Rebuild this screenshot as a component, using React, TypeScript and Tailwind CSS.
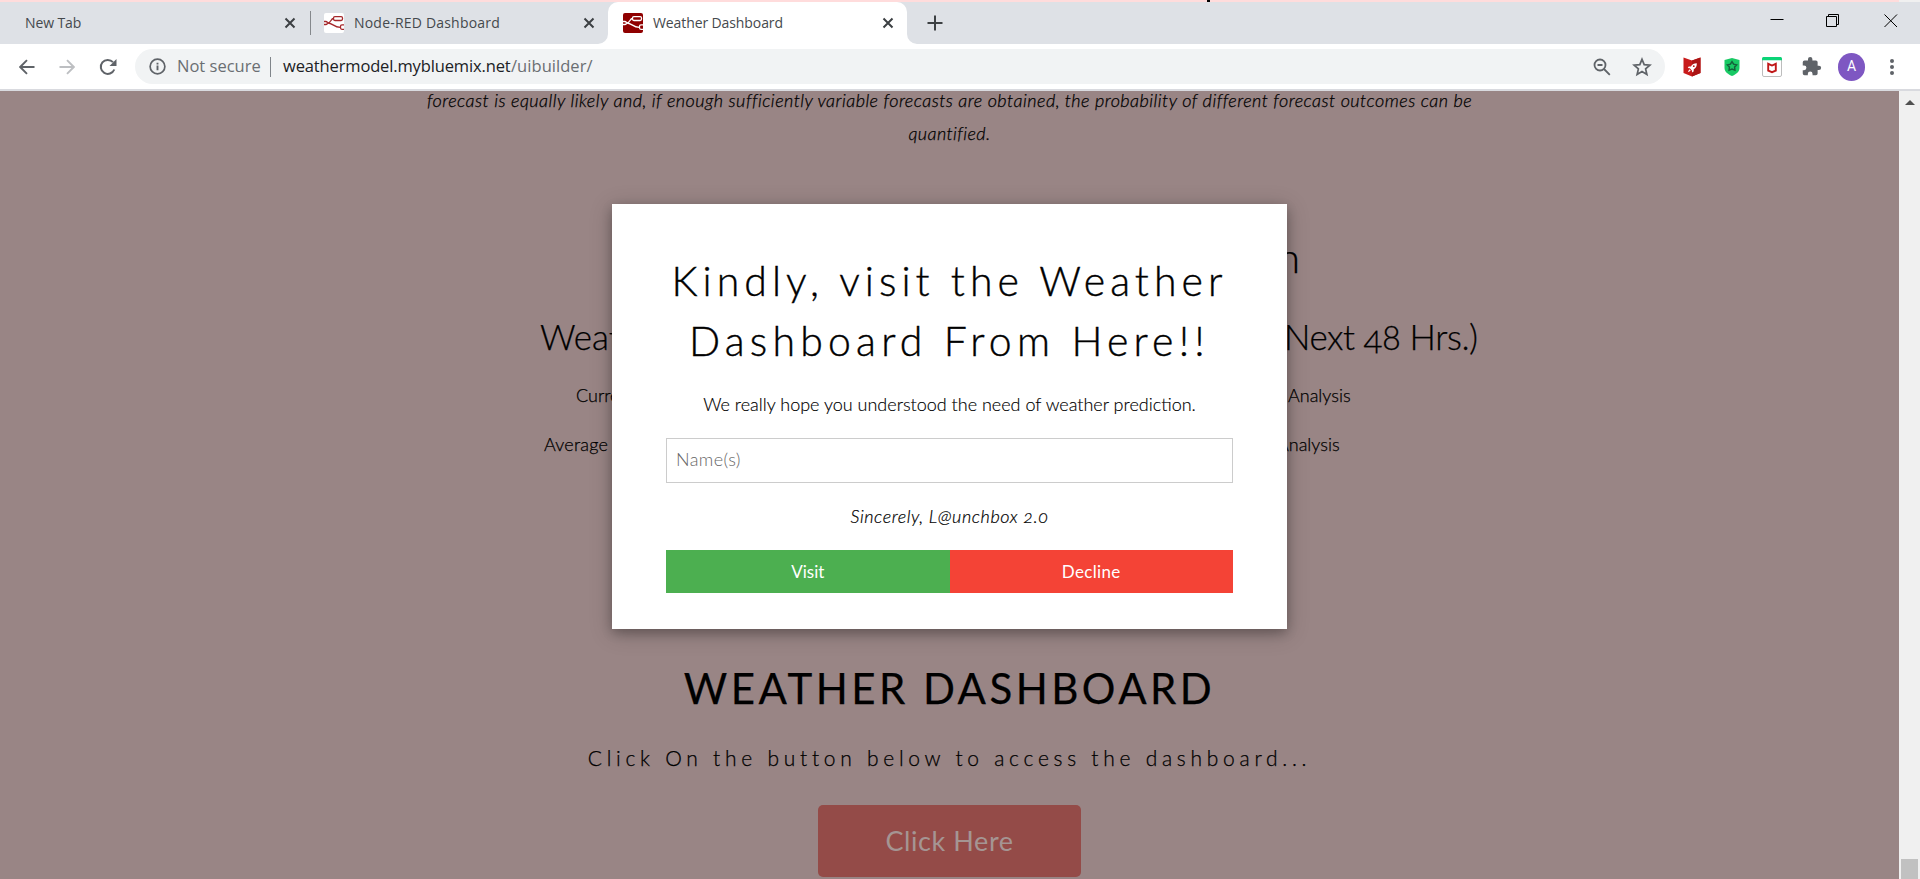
import type { ReactNode } from "react";

function NodeRed({ bg, fg, className = "" }: { bg: string; fg: string; className?: string }) {
  return (
    <svg viewBox="0 0 20 20" className={"h-5 w-5 shrink-0 " + className}>
      <rect width="20" height="20" rx="2" fill={bg} />
      <g fill="none" stroke={fg} strokeWidth="1.3">
        <path d="M0 8.500h2a1.300 1.300 0 0 1 1.300 1.300v.4A1.300 1.300 0 0 1 2 11.500H0M3.300 10C7.500 10 6.500 5.500 9.500 5.500M3.300 10c5-.5 6.500 4.500 13.200 4.300" />
        <rect x="9.500" y="3.700" width="9" height="3.800" rx="1.400" />
        <path d="M20 11.800h-2a1.500 1.500 0 0 0-1.500 1.500v1.500a1.500 1.500 0 0 0 1.500 1.500h2" />
      </g>
    </svg>
  );
}

function TabClose() {
  return (
    <svg viewBox="0 0 12 12" className="h-3 w-3 shrink-0" stroke="#3c4043" strokeWidth="2">
      <path d="M1.500 1.500l9 9M10.500 1.500l-9 9" />
    </svg>
  );
}

function TabBar() {
  return (
    <div className="flex h-[42px] shrink-0 bg-[#dee1e6] text-[14px] tracking-[-0.1px] text-[#45494d]">
      <div className="flex w-[310px] shrink-0 items-center justify-between pr-[14px] pb-px pl-[25px]">
        <span>New Tab</span>
        <TabClose />
      </div>
      <div className="mt-[9px] h-6 w-px shrink-0 bg-[#85888c]" />
      <div className="flex w-[297px] shrink-0 items-center pr-[13px] pb-px pl-[13px]">
        <NodeRed bg="#ffffff" fg="#a5282c" />
        <span className="ml-[10px] flex-1 tracking-[0.2px]">Node-RED Dashboard</span>
        <TabClose />
      </div>
      <div className="relative flex w-[299px] shrink-0 items-center rounded-t-[10px] bg-white pr-[13px] pb-px pl-[15px]">
        <svg viewBox="0 0 10 10" className="absolute bottom-0 -left-[10px] h-[10px] w-[10px]" fill="#fff"><path d="M10 0v10H0A10 10 0 0 0 10 0z" /></svg>
        <svg viewBox="0 0 10 10" className="absolute -right-[10px] bottom-0 h-[10px] w-[10px]" fill="#fff"><path d="M0 0v10h10A10 10 0 0 1 0 0z" /></svg>
        <NodeRed bg="#8f0000" fg="#ffffff" />
        <span className="ml-[10px] flex-1">Weather Dashboard</span>
        <TabClose />
      </div>
      <div className="flex flex-1 items-center pb-px pl-[20px]">
        <svg viewBox="0 0 16 16" className="h-4 w-4" stroke="#3c4043" strokeWidth="2"><path d="M8 .5v15M.5 8h15" /></svg>
      </div>
      <div className="flex items-start pt-[12px] pr-[22px]">
        <svg viewBox="0 0 14 14" className="mr-[42px] h-[14px] w-[14px]" stroke="#000"><path d="M.5 5.500h13" /></svg>
        <svg viewBox="0 0 14 14" className="mr-[44px] h-[14px] w-[14px]" stroke="#000" fill="none"><path d="M.5 2.500h10v10H.5zM2.500 2.500V.5h10v10h-2" /></svg>
        <svg viewBox="0 0 14 14" className="h-[14px] w-[14px]" stroke="#000"><path d="M.5.5l12.500 12.500M13 .5L.5 13" /></svg>
      </div>
    </div>
  );
}

function Toolbar() {
  return (
    <div className="flex h-[47px] shrink-0 items-center border-b-2 border-[#d9dadf] bg-white pl-[19px]">
      <svg viewBox="0 0 16 16" className="h-4 w-4" fill="none" stroke="#5f6368" strokeWidth="1.900"><path d="M15.500 8H1.500M8 1.200L1.200 8 8 14.800" /></svg>
      <svg viewBox="0 0 16 16" className="ml-6 h-4 w-4" fill="none" stroke="#bdbfc2" strokeWidth="1.900"><path d="M.5 8h14M8 1.200L14.800 8 8 14.800" /></svg>
      <svg viewBox="0 0 18 18" className="ml-6 h-[18px] w-[18px]" fill="none" stroke="#5f6368" strokeWidth="2"><path d="M15.300 11.500A7 7 0 1 1 14 4.200" /><path d="M17.500 1v7h-7z" fill="#5f6368" stroke="none" /></svg>
      <div className="ml-[18px] flex h-[35px] w-[1530px] items-center rounded-full bg-[#f1f3f4] pr-[13px] pl-[14px] text-[16.5px]">
        <svg viewBox="0 0 18 18" className="h-[17px] w-[17px]" fill="none" stroke="#5f6368" strokeWidth="1.800"><circle cx="9" cy="9" r="7.800" /><path d="M9 8v5M9 5v1.800" strokeWidth="2" /></svg>
        <span className="ml-[11px] w-[84px] text-[#6a6e72]">Not secure</span>
        <span className="ml-[9px] h-5 w-px bg-[#80858a]" />
        <span className="ml-[12px] w-[228px] tracking-[-0.140px] text-[#202124]">weathermodel.mybluemix.net</span>
        <span className="flex-1 tracking-[0.05px] text-[#6a6e72]">/uibuilder/</span>
        <svg viewBox="0 0 18 18" className="h-[18px] w-[18px]" fill="none" stroke="#5f6368" strokeWidth="1.800"><circle cx="7" cy="7" r="5.500" /><path d="M4.500 7h5M11 11l5.800 5.800" /></svg>
        <svg viewBox="0 0 20 20" className="ml-[21px] h-5 w-5" fill="none" stroke="#5f6368" strokeWidth="1.700"><path d="M10 2.300l2.200 5.300 5.700.5-4.300 3.800 1.300 5.600L10 14.500l-4.900 3 1.300-5.600L2.100 8.100l5.700-.5z" /></svg>
      </div>
      <svg viewBox="0 0 18 20" className="ml-[18px] h-5 w-[18px]">
        <path d="M.5.500L9 3.500l8.500-3V16L9 19.500.500 16z" fill="#c81a1a" />
        <path d="M9 3.500l8.500-3V16L9 19.500z" fill="#ab1414" />
        <path d="M13.800 6.200c-2.800 0-4.600 1.200-5.900 3.200l-2.200.2-.9 1.400 2 .3 2.100 2.100.3 2 1.400-.9.200-2.200c2-1.300 3.200-3.200 3-6.100zM6.300 12.200l-1.500 3 3-1.500z" fill="#fff" />
        <circle cx="10.800" cy="9.200" r=".9" fill="#b81616" />
      </svg>
      <svg viewBox="0 0 16 18" className="ml-[23px] h-[18px] w-4"><path d="M8 0l7.500 2v8c0 4-4 6.500-7.500 8C4.500 16.500.5 14 .5 10V2z" fill="#18c964" /><path d="M8 3.700l1.600 2.500 3 .7-2 2.200.3 3L8 11l-2.900 1.100.3-3-2-2.200 3-.7z" fill="none" stroke="#15603b" strokeWidth="1.500" /></svg>
      <svg viewBox="0 0 20 20" className="ml-[22px] h-5 w-5"><rect x=".5" y=".5" width="19" height="19" rx="1.500" fill="#fff" stroke="#bdbdbd" /><path d="M0 3.200V1.500Q0 0 1.500 0h17Q20 0 20 1.500v1.700z" fill="#0bd477" /><path d="M6.200 6.800v6.800l3.800 1.600 3.800-1.600V6.800L10 8.500z" fill="none" stroke="#c01818" strokeWidth="1.900" /></svg>
      <svg viewBox="0 0 24 24" className="ml-[19px] h-[21px] w-[21px]" fill="#5f6368"><path d="M20.500 11H19V7a2 2 0 0 0-2-2h-4V3.500a2.500 2.500 0 0 0-5 0V5H4a2 2 0 0 0-2 2v3.800h1.500a2.700 2.700 0 0 1 0 5.400H2V20a2 2 0 0 0 2 2h3.800v-1.500a2.700 2.700 0 0 1 5.400 0V22H17a2 2 0 0 0 2-2v-4h1.500a2.500 2.500 0 0 0 0-5z" /></svg>
      <div className="ml-[16px] flex h-7 w-[27px] items-center justify-center rounded-full bg-[#7e57c2] font-[Roboto] text-[14px] text-white">A</div>
      <svg viewBox="0 0 4 16" className="ml-[25px] h-4 w-1" fill="#5f6368"><circle cx="2" cy="2" r="2" /><circle cx="2" cy="8" r="2" /><circle cx="2" cy="14" r="2" /></svg>
    </div>
  );
}

function Column({ title, items, className }: { title: ReactNode; items: ReactNode[]; className: string }) {
  return (
    <div className={"flex flex-col whitespace-nowrap " + className}>
      <h3 className="text-[35px] leading-[50px] oldstyle-nums">{title}</h3>
      <div className="mt-[10px] text-[18px] leading-[49px]">{items}</div>
    </div>
  );
}

function Page() {
  return (
    <div className="flex h-full flex-col items-center overflow-hidden text-black [-webkit-text-stroke:0.25px]">
      <p className="mt-[-7px] text-center text-[18px] leading-[33px] whitespace-nowrap italic">
        <span className="tracking-[0.47px]">forecast is equally likely and, if enough sufficiently variable forecasts are obtained, the probability of different forecast outcomes can be</span>
        <br />
        <span className="tracking-[0.4px]">quantified.</span>
      </p>
      <h2 className="mt-[77px] ml-[516px] w-[180px] text-right text-[42px] leading-[60px]">Prediction</h2>
      <div className="mt-[24px] ml-[540px] flex w-[939px] shrink-0 justify-between self-start">
        <Column
          className="w-[160px]"
          title="Weather"
          items={[<p key="a" className="pl-[36px]">Current</p>, <p key="b" className="pl-[4px] tracking-[0.22px]">Average</p>]}
        />
        <Column
          className="w-[195px]"
          title={<span className="tracking-[-0.45px]">Next 48 Hrs.)</span>}
          items={[<p key="a" className="pl-[4px]">Analysis</p>, <p key="b" className="-ml-[7px]">Analysis</p>]}
        />
      </div>
      <h2 className="mt-[189px] text-[42px] leading-[60px] font-normal tracking-[3.47px] whitespace-nowrap">WEATHER DASHBOARD</h2>
      <p className="mt-[24px] text-[21px] leading-[32px] tracking-[4.73px] whitespace-nowrap">Click On the button below to access the dashboard...</p>
      <button className="mt-[31px] h-[72px] w-[263px] shrink-0 rounded-[5px] bg-[#944b48] text-[27px] font-normal tracking-[0.58px] text-[#a59593] [-webkit-text-stroke:0]">Click Here</button>
    </div>
  );
}

function Modal() {
  return (
    <div className="absolute top-[113px] left-[612px] flex h-[425px] w-[675px] flex-col bg-white px-[54px] pt-[47px] text-center text-black shadow-[0_4px_10px_rgba(0,0,0,0.2),0_4px_20px_rgba(0,0,0,0.25)]">
      <h2 className="text-[41px] leading-[60px] whitespace-nowrap [-webkit-text-stroke:0.4px]">
        <span className="tracking-[5.03px]">Kindly, visit the Weather</span>
        <br />
        <span className="tracking-[5.2px]">Dashboard From Here!!</span>
      </h2>
      <p className="mt-[13px] text-[18px] leading-[40px] [-webkit-text-stroke:0.15px]">We really hope you understood the need of weather prediction.</p>
      <input placeholder="Name(s)" className="mt-[14px] h-[45px] w-full shrink-0 border border-[#ccc] px-[9px] pb-[3px] text-[18px] tracking-[0.4px] placeholder:text-[#666]" />
      <p className="mt-[13px] text-[18px] leading-[40px] tracking-[0.57px] italic oldstyle-nums [-webkit-text-stroke:0.2px]">Sincerely, L@unchbox 2.0</p>
      <div className="mt-[14px] flex h-[43px] text-[17px] font-normal text-white">
        <button className="flex-1 bg-[#4caf50]">Visit</button>
        <button className="flex-1 bg-[#f44336] tracking-[0.34px]">Decline</button>
      </div>
    </div>
  );
}

export default function App() {
  return (
    <div className="flex h-[879px] w-[1920px] flex-col overflow-hidden font-['Open_Sans',sans-serif]">
      <div className="flex h-[2px] shrink-0 bg-[#ffdcdc]">
        <div className="ml-[1207px] h-full w-[3px] bg-black" />
        <div className="ml-auto h-full w-[21px] bg-[#f0f0f0]" />
      </div>
      <TabBar />
      <Toolbar />
      <div className="flex min-h-0 flex-1">
        <div className="relative h-full w-[1899px] bg-[#998585] font-['Lato',sans-serif] font-light">
          <Page />
          <Modal />
        </div>
        <div className="flex w-[21px] flex-col items-center justify-between bg-[#f0f0f0] pt-[9px]">
          <svg viewBox="0 0 10 5" className="h-[5px] w-[10px]" fill="#505050"><path d="M5 0l5 5H0z" /></svg>
          <div className="h-5 w-[17px] bg-[#c1c1c1]" />
        </div>
      </div>
    </div>
  );
}
